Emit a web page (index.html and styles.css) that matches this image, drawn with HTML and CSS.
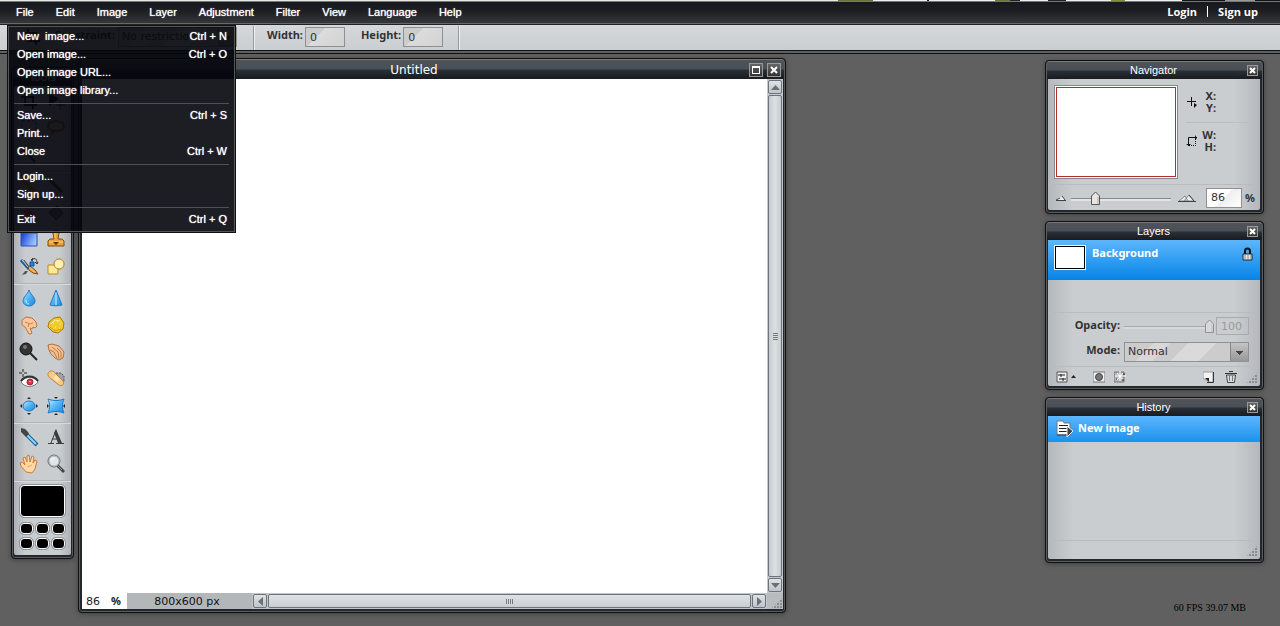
FILE: index.html
```html
<!DOCTYPE html>
<html lang="en">
<head>
<meta charset="utf-8">
<title>Image editor</title>
<link rel="stylesheet" href="styles.css">
</head>
<body>
<div class="strip"></div>
<header class="menubar">
  <nav class="menus">
    <button class="menu-btn">File</button>
    <button class="menu-btn">Edit</button>
    <button class="menu-btn">Image</button>
    <button class="menu-btn">Layer</button>
    <button class="menu-btn">Adjustment</button>
    <button class="menu-btn">Filter</button>
    <button class="menu-btn">View</button>
    <button class="menu-btn">Language</button>
    <button class="menu-btn">Help</button>
  </nav>
  <div class="account"><a href="#login">Login</a><span class="bar"></span><a href="#signup">Sign up</a></div>
  <div class="dropdown">
    <div class="menu-group">
      <button class="item"><span>New&nbsp; image...</span><span>Ctrl + N</span></button>
      <button class="item"><span>Open image...</span><span>Ctrl + O</span></button>
      <button class="item"><span>Open image URL...</span></button>
      <button class="item"><span>Open image library...</span></button>
    </div>
    <div class="menu-group">
      <button class="item"><span>Save...</span><span>Ctrl + S</span></button>
      <button class="item"><span>Print...</span></button>
      <button class="item"><span>Close</span><span>Ctrl + W</span></button>
    </div>
    <div class="menu-group">
      <button class="item"><span>Login...</span></button>
      <button class="item"><span>Sign up...</span></button>
    </div>
    <div class="menu-group">
      <button class="item"><span>Exit</span><span>Ctrl + Q</span></button>
    </div>
  </div>
</header>

<div class="options">
  <svg class="opt-icon" width="16" height="16" viewBox="0 0 16 16"><path d="M4 0v12h12M0 4h12v12" fill="none" stroke="#222" stroke-width="2"/></svg>
  <div class="opt-group first">
    <label class="lbl" for="constraint">Constraint:</label>
    <span class="select constraint"><select id="constraint"><option>No restriction</option></select></span>
  </div>
  <div class="opt-group">
    <label class="lbl" for="w">Width:</label><input class="field" id="w" value="0">
    <label class="lbl second" for="h">Height:</label><input class="field" id="h" value="0">
  </div>
</div>

<main class="workspace">
  <section class="window tools">
    <h2 class="title">Tools</h2>
    <div class="tool-body">
      <div class="tool-grid">
        <button aria-label="Crop"><svg viewBox="0 0 20 20"><path d="M6 2v12h12M2 6h12v12" fill="none" stroke="#222" stroke-width="2"/></svg></button>
        <button aria-label="Move"><svg viewBox="0 0 20 20"><path d="M3 2v13l10-7z" fill="#222"/><path d="M14 10v9M10 14h9" stroke="#222"/></svg></button>
        <button aria-label="Marquee"><svg viewBox="0 0 20 20"><path d="M3 3h14v14H3z" fill="none" stroke="#246" stroke-dasharray="3 2"/></svg></button>
        <button aria-label="Lasso"><svg viewBox="0 0 20 20"><ellipse cx="10" cy="8" rx="8" ry="5" fill="none" stroke="#a62" stroke-width="2"/><path d="M8 13l-3 4" stroke="#a62" stroke-width="2"/></svg></button>
        <button aria-label="Wand"><svg viewBox="0 0 20 20"><path d="M4 4l12 13" stroke="#222" stroke-width="2"/></svg></button>
        <span></span>
      </div>
      <div class="tool-grid">
        <button aria-label="Pencil"><svg viewBox="0 0 20 20"><path d="M3 3l13 13" stroke="#d92" stroke-width="4"/></svg></button>
        <button aria-label="Brush"><svg viewBox="0 0 20 20"><path d="M3 3l13 13" stroke="#543" stroke-width="3"/></svg></button>
        <button aria-label="Eraser"><svg viewBox="0 0 20 20"><path d="M3 8l5-4 9 8-5 4z" fill="#d66"/></svg></button>
        <button aria-label="Paint bucket"><svg viewBox="0 0 20 20"><path d="M3 9l8-6 6 7-7 7z" fill="#678" stroke="#333"/></svg></button>
        <button aria-label="Gradient"><svg viewBox="0 0 20 20"><defs><linearGradient id="gr" x2="1" y2=".4"><stop offset="0" stop-color="#1238c8"/><stop offset="1" stop-color="#9cc4ff"/></linearGradient></defs><path d="M2 3h16v13H2z" fill="url(#gr)" stroke="#2a50b8"/></svg></button>
        <button aria-label="Clone stamp"><svg viewBox="0 0 20 20"><path d="M7 3a3 3 0 1 1 6 0l-1 6h4l2 2v5H2v-5l2-2h4z" fill="#e9a33a" stroke="#80480c"/><path d="M3 12h14" stroke="#ffd27a"/><path d="M9 2v6" stroke="#ffd27a"/><path d="M7 12h6l-3 3z" fill="#5c3108"/></svg></button>
        <button aria-label="Color replace"><svg viewBox="0 0 20 20"><path d="M2 3l8 9" stroke="#2b5788" stroke-width="3"/><path d="M3 3l7 8" stroke="#b9dbf8"/><path d="M5 3l6 8" stroke="#444"/><path d="M9 10l2-1 5 4 3 4-5-1-4-3z" fill="#e8b468" stroke="#764410"/><path d="M3 18l3-4 3 0-2 3z" fill="#555"/><path d="M11 5h4v4h-4z" fill="#1689e6" stroke="#05579d"/><path d="M13 3c3-3 5-1 5 3m-2-1l2 2 1-2M14 1l-2 2 2 1" fill="none" stroke="#333"/></svg></button>
        <button aria-label="Drawing shapes"><svg viewBox="0 0 20 20"><circle cx="13" cy="7" r="5" fill="#ffe9a0" stroke="#b58a2c"/><path d="M2 8h10v9H2z" fill="#ffe896" stroke="#b58a2c"/><circle cx="13" cy="7" r="5" fill="#fff0b8" stroke="#b58a2c"/></svg></button>
      </div>
      <div class="tool-grid">
        <button aria-label="Blur"><svg viewBox="0 0 20 20"><defs><linearGradient id="bl" x2="1" y2="1"><stop offset="0" stop-color="#c4eaff"/><stop offset=".5" stop-color="#4fb4f7"/><stop offset="1" stop-color="#1a84e0"/></linearGradient></defs><path d="M10 2c1 4 6 7 6 11a6 5 0 0 1-12 0c0-4 5-7 6-11z" fill="url(#bl)" stroke="#1c76c4"/><path d="M7 12c0 3 1 4 3 4" fill="none" stroke="#d8f1ff"/></svg></button>
        <button aria-label="Sharpen"><svg viewBox="0 0 20 20"><path d="M10 2l6 15c-3 1-9 1-12 0z" fill="url(#bl)" stroke="#1c76c4"/><path d="M10 5v12" stroke="#8fd0fb" stroke-width="2"/></svg></button>
        <button aria-label="Smudge"><svg viewBox="0 0 20 20"><path d="M3 5l4-3 6 1 4 4 1 4-2 2-2-1-1 2-2-1 2 5-1 1-2 0-4-7-3-2z" fill="#f9c79a" stroke="#b87443"/><path d="M6 7l5 2 3-1M9 12l1-3" fill="none" stroke="#c88350"/></svg></button>
        <button aria-label="Sponge"><svg viewBox="0 0 20 20"><path d="M3 7l5-4 6-1 4 6-1 6-5 4-5-1-5-5z" fill="#f3ca2c" stroke="#a97906"/><path d="M5 9l4-4 5 1M7 8h1M11 7h1M14 9h1M9 12h1M13 13h1M7 14h1" fill="none" stroke="#fff09a"/><path d="M4 12l5 4 6-2" fill="none" stroke="#cf9a10"/></svg></button>
        <button aria-label="Dodge"><svg viewBox="0 0 20 20"><path d="M11 11l7 7" stroke="#222" stroke-width="2"/><circle cx="7" cy="7" r="6" fill="#333" stroke="#111"/><circle cx="6" cy="5" r="2" fill="#777"/></svg></button>
        <button aria-label="Burn"><svg viewBox="0 0 20 20"><path d="M2 3l4-1 7 2 5 6-1 6-4 2-4-2-4-4-2-4z" fill="#f6c090" stroke="#b0703f"/><path d="M6 5l6 5 1 7M4 8l4 2 3 6M11 6l4 4 0 6" fill="none" stroke="#b97c4c"/></svg></button>
        <button aria-label="Red eye"><svg viewBox="0 0 20 20"><path d="M2 13c4-6 13-6 17 0-4 6-13 6-17 0z" fill="#fff" stroke="#777"/><path d="M2 12c4-6 13-6 17 0" fill="none" stroke="#333" stroke-width="2"/><circle cx="11" cy="13" r="3" fill="#e33448" stroke="#9b2530"/><path d="M11 12v1" stroke="#fff"/><path d="M4 0v3M4 5v3M0 4h3M5 4h3" stroke="#222"/></svg></button>
        <button aria-label="Spot heal"><svg viewBox="0 0 20 20"><path d="M10 4h5l3 3v6l-4 2" fill="#9ea2a5" stroke="#555" stroke-dasharray="2 1"/><path d="M3 3c2-2 5-1 6 1l8 8c2 3-1 6-4 4L4 9C2 7 1 5 3 3z" fill="#f8cb86" stroke="#b98442"/><path d="M7 9l3-3 4 4-3 3z" fill="#ffe3b0"/></svg></button>
        <button aria-label="Bloat"><svg viewBox="0 0 20 20"><ellipse cx="10" cy="10" rx="6" ry="5" fill="url(#bl)" stroke="#1c76c4"/><path d="M8 3l2-2 2 2zM8 17l2 2 2-2zM3 8l-2 2 2 2zM17 8l2 2-2 2z" fill="#222"/></svg></button>
        <button aria-label="Pinch"><svg viewBox="0 0 20 20"><path d="M2 3c5 2 11 2 16 0-2 4-2 10 0 14-5-2-11-2-16 0 2-4 2-10 0-14z" fill="url(#bl)" stroke="#1c76c4"/><path d="M8 1l2 2 2-2zM8 19l2-2 2 2zM1 8l2 2-2 2zM19 8l-2 2 2 2z" fill="#222"/></svg></button>
      </div>
      <div class="tool-grid">
        <button aria-label="Color picker"><svg viewBox="0 0 20 20"><path d="M8 8l10 10" stroke="#17659f" stroke-width="4"/><path d="M8 8l9 9" stroke="#8cd2fb" stroke-width="2"/><path d="M2 1l4 1 3 3 1 2-3 3-2-2-3-3z" fill="#444"/></svg></button>
        <button aria-label="Type"><svg viewBox="0 0 20 20"><path d="M10 3L5 16M6 12h7" fill="none" stroke="#3a3d40"/><path d="M10 2l6 14h-4L8 6z" fill="#3a3d40"/><path d="M2 16.500h6M10 16.500h8" stroke="#3a3d40"/></svg></button>
        <button aria-label="Hand"><svg viewBox="0 0 20 20"><path d="M7 18l-5-6-1-3 2-1 3 3-2-7 2-1 2 5V2l2-1 1 7 2-6 2 1-1 6 2-3 2 1-2 8-3 4z" fill="#ffd9a8" stroke="#d07a30"/><path d="M8 13l5-2" stroke="#f1a45c"/></svg></button>
        <button aria-label="Zoom"><svg viewBox="0 0 20 20"><path d="M11 11l7 7" stroke="#444" stroke-width="3"/><path d="M11 11l5 5" stroke="#999"/><circle cx="8" cy="7" r="6" fill="#dfe7ee" stroke="#666"/><circle cx="8" cy="7" r="5" fill="none" stroke="#aaa"/><path d="M5 7c0-2 1-3 3-3" fill="none" stroke="#fff"/></svg></button>
      </div>
      <div class="swatches">
        <button class="swatch main" aria-label="Main color"></button>
        <button class="swatch" aria-label="Color 1"></button><button class="swatch" aria-label="Color 2"></button><button class="swatch" aria-label="Color 3"></button>
        <button class="swatch" aria-label="Color 4"></button><button class="swatch" aria-label="Color 5"></button><button class="swatch" aria-label="Color 6"></button>
      </div>
    </div>
  </section>

  <section class="window document">
    <div class="title">
      <h2>Untitled</h2>
      <button class="win-btn" aria-label="Maximize"><svg width="12" height="12" viewBox="0 0 12 12" shape-rendering="crispEdges"><path d="M2 2h8v8H2zM3 4v5h6V4z" fill="#fff" fill-rule="evenodd"/></svg></button>
      <button class="win-btn" aria-label="Close"><svg width="12" height="12" viewBox="0 0 12 12"><path d="M3 3l6 6M9 3L3 9" stroke="#fff" stroke-width="2"/></svg></button>
    </div>
    <div class="doc-body">
      <div class="canvas"></div>
      <div class="scroll vertical">
        <button class="arrow" aria-label="Up"><svg width="9" height="5" viewBox="0 0 9 5"><path d="M0 5l4.500-5L9 5z"/></svg></button>
        <div class="thumb"><i class="grip"></i></div>
        <button class="arrow" aria-label="Down"><svg width="9" height="5" viewBox="0 0 9 5"><path d="M0 0l4.500 5L9 0z"/></svg></button>
      </div>
      <div class="status">
        <span class="zoom"><input aria-label="Zoom" value="86"><b>%</b></span>
        <span class="size">800x600 px</span>
        <div class="scroll horizontal">
          <button class="arrow" aria-label="Left"><svg width="5" height="9" viewBox="0 0 5 9"><path d="M5 0L0 4.500 5 9z"/></svg></button>
          <div class="thumb"><i class="grip"></i></div>
          <button class="arrow" aria-label="Right"><svg width="5" height="9" viewBox="0 0 5 9"><path d="M0 0l5 4.500L0 9z"/></svg></button>
        </div>
      </div>
      <div class="corner"><i class="resize"></i></div>
    </div>
  </section>

  <aside class="panels">
    <section class="window panel">
      <div class="title"><h2>Navigator</h2><button class="win-btn small" aria-label="Close navigator"><svg width="9" height="9" viewBox="0 0 9 9"><path d="M2 2l5 5M7 2L2 7" stroke="#fff" stroke-width="2"/></svg></button></div>
      <div class="panel-body">
        <div class="nav-top">
          <div class="preview"></div>
          <div class="info">
            <div class="info-row">
              <svg width="12" height="12" viewBox="0 0 12 12"><path d="M5.500 1v9M1 5.500h9" stroke="#111"/><path d="M8 7v5l3-3z" fill="#111"/></svg>
              <div class="coords"><div>X:</div><div>Y:</div></div>
            </div>
            <div class="info-row">
              <svg width="12" height="12" viewBox="0 0 12 12"><path d="M2.500 11V2.500H11" fill="none" stroke="#111"/><path d="M9.500 4v6.500H3" fill="none" stroke="#111" stroke-dasharray="1 1"/><path d="M9 0v5l2-2zM0 9h5l-2 2z" fill="#111"/></svg>
              <div class="coords"><div>W:</div><div>H:</div></div>
            </div>
          </div>
        </div>
        <div class="nav-zoom">
          <svg width="10" height="6" viewBox="0 0 10 6"><path d="M0 5l4-3 2 3zM3 5l3-4 3 4z" fill="#eee"/><path d="M0 5l4-2M6 1l3 4M0 5.500h10" stroke="#444"/></svg>
          <input class="slider" type="range" min="0" max="100" value="22" aria-label="Zoom level">
          <svg width="18" height="8" viewBox="0 0 18 8"><path d="M1 7l6-5 3 5zM6 7l5-6 5 6z" fill="#eee" stroke="#888"/><path d="M11 1l5 6M0 7.500h18" stroke="#444"/></svg>
          <input class="field light" value="86" aria-label="Zoom percent"><b class="pct">%</b>
        </div>
      </div>
    </section>

    <section class="window panel">
      <div class="title"><h2>Layers</h2><button class="win-btn small" aria-label="Close layers"><svg width="9" height="9" viewBox="0 0 9 9"><path d="M2 2l5 5M7 2L2 7" stroke="#fff" stroke-width="2"/></svg></button></div>
      <div class="panel-body">
        <div class="layer"><i class="thumbnail"></i><span>Background</span>
          <svg width="11" height="14" viewBox="0 0 11 14"><path d="M3 7V4a2.500 2.500 0 0 1 5 0v3" fill="none" stroke="#111" stroke-width="2"/><path d="M1 7h9v6H1z" fill="#e8e8e8" stroke="#222"/><path d="M2 9h7M2 11h7" stroke="#888" stroke-dasharray="2 1"/></svg></div>
        <div class="layer-space"></div>
        <div class="props">
          <label class="lbl" for="op">Opacity:</label>
          <div class="opacity"><input class="slider" id="op" type="range" value="100" disabled><input class="field" value="100" disabled aria-label="Opacity value"></div>
          <label class="lbl" for="mode">Mode:</label>
          <span class="select"><select id="mode"><option>Normal</option></select></span>
        </div>
        <div class="layer-tools">
          <button aria-label="Layer settings"><svg width="20" height="12" viewBox="0 0 20 12"><path d="M1 1h10v10H1z" fill="#eee" stroke="#555"/><path d="M2 4h7M3 8h7M5 3v3M7 7v3" stroke="#222"/><path d="M15 7l2.500-3L20 7z" fill="#222"/></svg></button>
          <button class="mask" aria-label="Add mask"><svg width="12" height="12" viewBox="0 0 12 12"><path d="M0 1h12v10H0z" fill="#f0f0f0" stroke="#777"/><circle cx="6" cy="6" r="3.500" fill="#777" stroke="#444"/></svg></button>
          <button class="styles" aria-label="Layer styles"><svg width="12" height="12" viewBox="0 0 12 12"><path d="M0 1h10v10H0z" fill="#b5b5b5" stroke="#777"/><path d="M6 0v10M1 5h11M3 2l6 7M9 2L3 9" stroke="#fff"/><path d="M8 9h2M9 3h2M2 8h1" stroke="#222"/></svg></button>
          <button class="new" aria-label="New layer"><svg width="11" height="12" viewBox="0 0 11 12"><path d="M0 1h10v10H6L0 7z" fill="#f2f2f2" stroke="#999"/><path d="M10.500 1v10.500H4" stroke="#333" fill="none"/><path d="M2 7h4v4z" fill="#222"/></svg></button>
          <button class="trash" aria-label="Delete layer"><svg width="12" height="12" viewBox="0 0 12 12"><path d="M0 2.500h12M4 .500h4" stroke="#333"/><path d="M1.500 4h9l-1 7.500h-7z" fill="#ddd" stroke="#444"/><path d="M4.500 5v5M7.500 5v5" stroke="#777"/></svg></button>
          <i class="resize"></i>
        </div>
      </div>
    </section>

    <section class="window panel">
      <div class="title"><h2>History</h2><button class="win-btn small" aria-label="Close history"><svg width="9" height="9" viewBox="0 0 9 9"><path d="M2 2l5 5M7 2L2 7" stroke="#fff" stroke-width="2"/></svg></button></div>
      <div class="panel-body">
        <div class="entry"><svg width="18" height="18" viewBox="0 0 18 18"><path d="M1 3V1h6l1 2h6v12H1z" fill="#fff" stroke="#777"/><path d="M3 5.500h9M3 8.500h8M3 11.500h8" stroke="#222"/><path d="M1 15h12" stroke="#333"/><path d="M11 6v11l6-6z" fill="#444" stroke="#eee"/></svg><span>New image</span></div>
        <div class="history-space"></div>
        <div class="history-foot"><i class="resize"></i></div>
      </div>
    </section>
  </aside>
  <p class="stats">60 FPS 39.07 MB</p>
</main>
</body>
</html>
```
FILE: styles.css
```css
* { box-sizing: border-box; }
html, body { height: 100%; }
body {
  margin: 0;
  display: flex;
  flex-direction: column;
  overflow: hidden;
  background: #606060;
  font: 11px/14px "DejaVu Sans", Verdana, sans-serif;
  color: #333;
}
button {
  margin: 0; padding: 0; border: 0; background: none;
  font: inherit; color: inherit;
}
input, select { margin: 0; border: 0; font: inherit; color: inherit; }
h2 { margin: 0; font: inherit; }
svg { display: block; flex: none; }

.strip {
  height: 1px;
  flex: none;
  background: linear-gradient(90deg, #e3ebe4 838px, #6b7338 838px 873px, #eee 873px 927px, #222 927px 929px, #eee 929px 995px, #6b7338 995px 1010px, #222 1010px 1020px, #eee 1020px 1048px, #222 1048px 1066px, #eee 1066px 1111px, #7d9038 1111px 1125px, #eee 1125px 1182px, #111 1182px 1225px, #999 1225px 1255px, #111 1255px);
}

.menubar {
  position: relative;
  z-index: 5;
  flex: none;
  display: flex;
  justify-content: space-between;
  height: 23px;
  padding: 0 22px 1px 16px;
  border-top: 1px solid #777;
  border-bottom: 1px solid #686868;
  background: linear-gradient(#17191e, #1d1f23 45%, #35373a);
  color: #fff;
}
.menus { display: flex; gap: 22px; }
.menu-btn, .item {
  font-family: "Liberation Sans", Arial, sans-serif;
  text-shadow: 0 0 1px #fff;
}
.account {
  display: flex;
  align-items: center;
  gap: 10px;
  padding-bottom: 1px;
  font-family: "Open Sans", "Trebuchet MS", sans-serif;
  font-weight: bold;
}
.account a { color: #fff; text-decoration: none; }
.bar { width: 1px; height: 11px; background: #fff; }

.dropdown {
  position: absolute;
  left: 7px;
  top: 23px;
  width: 229px;
  padding: 1px 6px 4px;
  border: 1px solid #111;
  outline: 1px solid #555;
  outline-offset: -2px;
  background: rgba(4, 6, 12, 0.9);
}
.menu-group + .menu-group {
  margin-top: 4px;
  padding-top: 2px;
  border-top: 1px solid #505050;
}
.item {
  display: flex;
  justify-content: space-between;
  align-items: center;
  width: 100%;
  height: 18px;
  padding: 0 2px 0 3px;
}

.options {
  flex: none;
  display: flex;
  height: 30px;
  padding: 1px 0 0 24px;
  border-top: 1px solid #222;
  border-bottom: 4px double #111;
  background: linear-gradient(#d5d8da, #cbced1);
  background-clip: padding-box;
}
.opt-icon { margin: 3px 10px 0 0; }
.opt-group {
  display: flex;
  padding: 0 15px 0 13px;
  border-right: 1px solid #999;
  box-shadow: 1px 0 #eee;
}
.opt-group.first { width: 204px; padding-left: 4px; }
.lbl {
  font-family: "Noto Sans", "Trebuchet MS", sans-serif;
  font-weight: bold;
  line-height: 18px;
}
.lbl.second { margin-left: 16px; }
.field {
  width: 40px;
  height: 20px;
  margin: 1px 0 0 2px;
  padding: 0 4px;
  border: 1px solid #8f8f8f;
  background: linear-gradient(135deg, #ccc 35%, #dcdcdc 35%, #d2d2d2);
}
.select {
  position: relative;
  display: block;
  height: 20px;
  border: 1px solid #909090;
  background: linear-gradient(135deg, #ccc 20%, #d8d8d8 20% 32%, #ccc 32% 45%, #dadada 45% 65%, #ccc 65%);
}
.select select {
  width: 100%;
  height: 18px;
  padding: 0 3px;
  appearance: none;
  background: none;
}
.select::after {
  content: "";
  position: absolute;
  right: 0; top: 0; bottom: 0;
  width: 17px;
  border-left: 1px solid #888;
  background: linear-gradient(#444, #444) 5px 8px / 7px 1px no-repeat,
    linear-gradient(#444, #444) 6px 9px / 5px 1px no-repeat,
    linear-gradient(#444, #444) 7px 10px / 3px 1px no-repeat,
    linear-gradient(#444, #444) 8px 11px / 1px 1px no-repeat,
    linear-gradient(#c4c4c4, #989898);
}
.constraint { width: 119px; margin: 1px 0 0 3px; flex: none; }

.workspace { position: relative; flex: 1; min-height: 0; }
.window {
  border: 1px solid #111;
  border-radius: 4px;
  padding: 0 2px 3px;
  background: #24272b;
  box-shadow: inset 0 0 0 1px #5a5d60, 0 1px 5px rgba(0, 0, 0, 0.35);
}
.title {
  display: flex;
  align-items: center;
  margin: 0 -1px;
  height: 18px;
  padding: 0 2px;
  border-top: 1px solid #777;
  border-radius: 3px 3px 0 0;
  background: linear-gradient(#505357, #484f57 48%, #2a3037 52%, #181b1f);
  color: #fff;
}
.title h2 { flex: 1; text-align: center; }
.win-btn {
  width: 14px;
  height: 14px;
  border: 1px solid #999;
  background: linear-gradient(#666, #333);
}
.win-btn.small { width: 11px; height: 11px; }

.tools { position: absolute; left: 11px; top: 13px; width: 63px; }
.tools .title { justify-content: center; }
.tool-body {
  padding: 1px 0 6px;
  border-radius: 2px;
  background: linear-gradient(90deg, #aeb2b7, #c9cdd0 20%, #c9cdd0 80%, #aeb2b7);
}
.tool-grid {
  display: grid;
  grid-template-columns: 27px 27px;
  grid-auto-rows: 27px;
  justify-content: center;
}
.tool-grid + .tool-grid, .swatches {
  margin-top: 3px;
  border-top: 1px solid #b2b6b9;
  box-shadow: inset 0 1px #d6d9db;
}
.tool-grid button { display: grid; place-items: center; }
.tool-grid svg { width: 20px; height: 20px; }
.swatches {
  display: grid;
  grid-template-columns: 13px 13px 13px;
  justify-content: center;
  gap: 4px 3px;
  padding-top: 4px;
}
.swatch {
  height: 11px;
  border: 1px solid #fff;
  border-radius: 4px;
  background: #000;
  outline: 1px solid #8d9195;
}
.swatch.main { grid-column: 1 / 4; height: 32px; margin-bottom: 2px; }

.document {
  position: absolute;
  left: 78px;
  top: 4px;
  width: 708px;
  height: 555px;
  padding-left: 3px;
  display: flex;
  flex-direction: column;
}
.document .title { flex: none; height: 20px; gap: 4px; font-size: 12px; padding: 1px 3px 0 2px; }
.doc-body {
  flex: 1;
  display: grid;
  grid-template: 1fr 16px / 1fr 16px;
  background: #cfd3d6;
}
.canvas { background: #fff; }
.scroll { display: flex; gap: 1px; padding: 1px; background: #c3c7ca; }
.vertical { flex-direction: column; }
.horizontal { flex: 1; }
.arrow {
  flex: none;
  display: grid;
  place-items: center;
  width: 14px;
  height: 14px;
  border: 1px solid #6b7280;
  border-radius: 2px;
  background: linear-gradient(#e0e3e5, #bfc4c8);
  fill: #6d7072;
}
.thumb {
  flex: 1;
  display: grid;
  place-items: center;
  border: 1px solid #6b7280;
  border-radius: 2px;
}
.vertical .thumb { background: linear-gradient(90deg, #c7cbcf, #dde0e2, #c7cbcf); }
.horizontal .thumb { background: linear-gradient(#dfe2e4, #cbcfd2); }
.grip { width: 7px; height: 5px; background: repeating-linear-gradient(90deg, #777 0 1px, #ddd 1px 2px); }
.vertical .grip { width: 5px; height: 7px; background: repeating-linear-gradient(#777 0 1px, #ddd 1px 2px); }
.status { display: flex; height: 16px; line-height: 17px; color: #222; }
.zoom { display: flex; width: 45px; padding-left: 4px; background: #fff; }
.zoom input { width: 25px; padding: 1px 0 0; background: none; }
.zoom b { font-family: "Noto Sans", sans-serif; line-height: 15px; }
.size { width: 125px; padding-right: 5px; text-align: center; background: #b4b7b9; color: #111; }
.corner { display: flex; align-items: end; justify-content: end; background: #b9bcbe; }
.resize {
  width: 12px;
  height: 12px;
  background: linear-gradient(#777, #777) 0 0 / 1px 1px,
    radial-gradient(circle at 1px 1px, #777 1px, transparent 1px) 0 0 / 3px 3px;
  background: radial-gradient(circle at 1px 1px, #8a8d90 1px, transparent 1px) 0 0 / 3px 3px;
  clip-path: polygon(100% 0, 100% 100%, 0 100%);
}

.panels {
  position: absolute;
  right: 16px;
  top: 6px;
  width: 219px;
  display: flex;
  flex-direction: column;
  gap: 7px;
}
.panel { padding-right: 3px; }
.panel .title {
  margin-right: -2px;
  padding: 0 4px 0 13px;
  font-family: "Liberation Sans", Arial, sans-serif;
}
.panel .title h2 { padding-bottom: 2px; }
.panel-body {
  border-radius: 0 0 2px 2px;
  background: linear-gradient(90deg, #b4b8bc, #cacdd0 12%, #cacdd0 88%, #b4b8bc);
}
.nav-top { display: flex; padding: 6px 7px 5px 6px; }
.preview {
  width: 124px;
  height: 94px;
  border: 1px solid #888;
  outline: 1px solid #b03030;
  outline-offset: -3px;
  background: #fff;
}
.info { flex: 1; padding-left: 8px; }
.info-row { display: flex; align-items: center; gap: 3px; height: 37px; }
.info-row:first-child { padding-bottom: 3px; }
.info-row + .info-row { border-top: 1px solid #bbbfc2; }
.coords { width: 15px; display: flex; flex-direction: column; align-items: end; font: bold 11px/12px "Noto Sans", sans-serif; }
.nav-zoom {
  display: flex;
  align-items: center;
  height: 26px;
  padding: 0 7px 0 8px;
  border-top: 1px solid #b8bcbf;
}
.slider {
  appearance: none;
  width: 100px;
  height: 16px;
  background: linear-gradient(#888, #888) 0 8px / 100% 1px no-repeat,
    linear-gradient(#e4e4e4, #e4e4e4) 0 9px / 100% 2px no-repeat;
}
.slider::-webkit-slider-thumb {
  appearance: none;
  width: 9px;
  height: 14px;
  background: url("data:image/svg+xml,%3Csvg xmlns='http://www.w3.org/2000/svg' width='9' height='14'%3E%3Cpath d='M4.500 1L8.500 5v8.500h-8V5z' fill='%23e6e6e6' stroke='%23555'/%3E%3Cpath d='M7 6v7' stroke='%23aaa'/%3E%3C/svg%3E") no-repeat;
}
.slider:disabled { opacity: 0.5; }
.nav-zoom .slider { margin: 0 7px 0 5px; }
.nav-zoom .field { width: 36px; margin: 0 0 0 10px; background: linear-gradient(135deg, #fff 50%, #eee 50%, #fff); }
.pct { margin-left: 3px; font-family: "Noto Sans", sans-serif; }

.layer {
  display: flex;
  height: 40px;
  padding: 5px 7px 0 6px;
  background: linear-gradient(#5cb6fd, #0685e6);
  color: #fff;
  font: bold 11px/15px "Noto Sans", "Trebuchet MS", sans-serif;
}
.layer span { flex: 1; padding-left: 6px; }
.layer svg { margin-top: 2px; }
.thumbnail {
  width: 32px;
  height: 25px;
  border: 1px solid #fff;
  outline: 1px solid #000;
  outline-offset: -2px;
  background: #fff;
}
.layer-space { height: 32px; }
.props {
  display: grid;
  grid-template-columns: 72px 125px;
  grid-template-rows: 18px 20px;
  gap: 7px 4px;
  padding: 4px 0;
  border-top: 1px solid #b8bcbf;
}
.props .lbl { text-align: right; line-height: 16px; }
.opacity { display: flex; align-items: center; }
.opacity .slider { width: 90px; }
.opacity .field { width: 33px; height: 18px; margin: 0 0 0 2px; color: #999; border-color: #aaa; background: none; }
.layer-tools {
  display: flex;
  align-items: center;
  height: 20px;
  padding-left: 8px;
  border-top: 1px solid #b8bcbf;
}
.mask { margin-left: 17px; }
.styles { margin-left: 9px; }
.new { margin-left: auto; }
.trash { margin: 0 9px 0 11px; }
.layer-tools .resize, .history-foot .resize { align-self: end; margin: 0 2px 2px 0; }
.entry {
  display: flex;
  height: 26px;
  padding: 4px 8px 0;
  background: linear-gradient(#5cb6fd, #1b92ec);
  color: #fff;
  font: bold 11px/15px "Noto Sans", "Trebuchet MS", sans-serif;
}
.entry span { padding-left: 4px; }
.history-space { height: 98px; }
.history-foot { display: flex; justify-content: end; height: 19px; border-top: 1px solid #b8bcbf; }

.stats {
  position: absolute;
  right: 34px;
  bottom: 11px;
  margin: 0;
  font: 10px/14px "Liberation Serif", "Times New Roman", serif;
  color: #000;
}
```
